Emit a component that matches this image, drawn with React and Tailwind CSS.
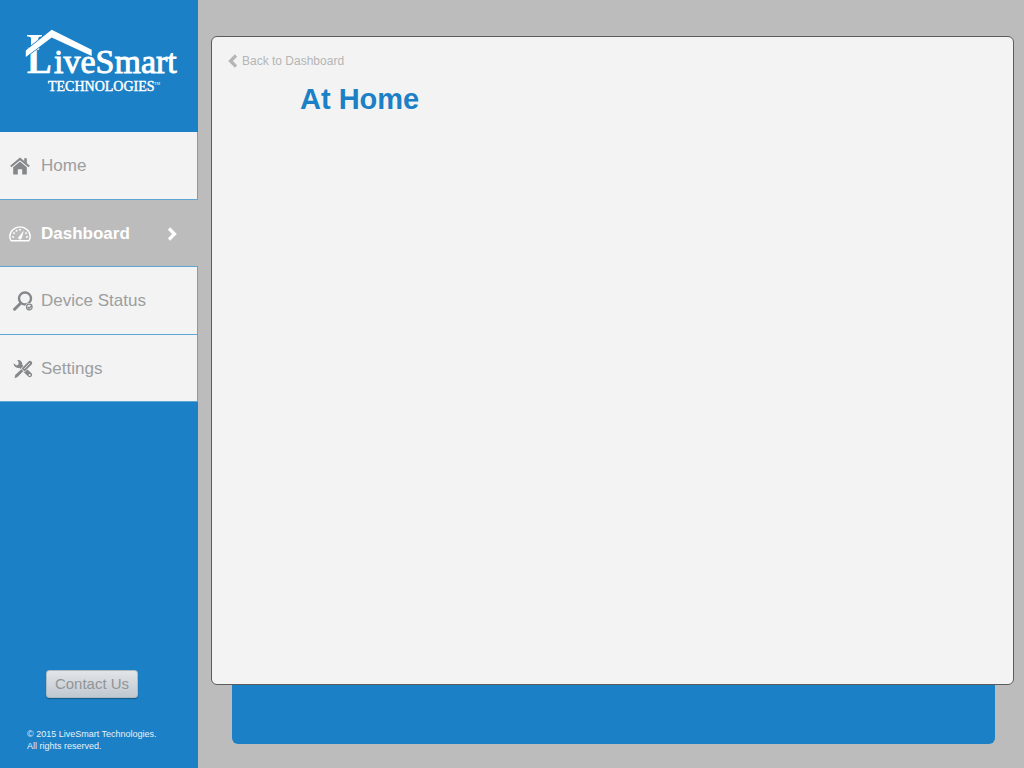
import React from "react";

function Logo() {
  return (
    <svg
      className="block h-[70px] w-[154px] fill-white"
      viewBox="24 26 154 70"
      role="img"
      aria-label="LiveSmart Technologies"
      fontFamily="'Liberation Serif', serif"
    >
      <path d="M27 35h15v1.2l-3 .8-.6 1V46L31 53V38l-.8-1-3.2-.8z" />
      <text x="27" y="73" fontSize="37" fontWeight="700" stroke="white" strokeWidth="0.4">L</text>
      <path className="fill-[#1b80c5]" d="M39.200 46l6-4v10h-6z" />
      <path
        className="fill-white stroke-[#1b80c5]"
        strokeWidth="1.6"
        paintOrder="stroke"
        d="M25.8 50.5 51.7 29.800 91.7 49.800V56L51.7 37.400 25.8 57z"
      />
      <text x="54" y="73" fontSize="34" stroke="white" strokeWidth="0.9">iveSmart</text>
      <text x="48" y="91" fontSize="14" stroke="white" strokeWidth="0.4">TECHNOLOGIES</text>
      <text x="154" y="85" fontSize="4">TM</text>
    </svg>
  );
}

function HomeIcon() {
  return (
    <svg className="h-[18px] w-5" viewBox="0 0 20 18" aria-hidden="true">
      <path d="M.8 9.6 10 1.9l9.2 7.7" fill="none" stroke="currentColor" strokeWidth="2" />
      <path d="M14.2 1.2h2.6v5.2l-2.6-2.2z" fill="currentColor" />
      <path d="M3.2 10.2 10 4.6l6.8 5.6v7.3h-4.6v-5.2H7.8v5.2H3.2z" fill="currentColor" />
    </svg>
  );
}

function GaugeIcon() {
  return (
    <svg className="h-4 w-[22px]" viewBox="0 0 22 16" aria-hidden="true">
      <path
        d="M2.2 14.7C1.2 13.7.8 12.2.8 10.7.8 5.2 5.4.9 11 .9s10.2 4.3 10.2 9.8c0 1.5-.4 3-1.4 4z"
        fill="none"
        stroke="currentColor"
        strokeWidth="1.4"
        strokeLinejoin="round"
      />
      <path d="M9.4 11.6c.4-1 3.4-4.6 5.4-7.2-.6 3.2-2 7.6-2.6 8.6-.8 1.2-3.4.4-2.8-1.4z" fill="currentColor" />
      <g fill="currentColor">
        <circle cx="4" cy="11" r="1" />
        <circle cx="5" cy="7.3" r="1" />
        <circle cx="7.5" cy="4.7" r="1" />
        <circle cx="11" cy="3.7" r="1" />
        <circle cx="17" cy="7.3" r="1" />
        <circle cx="18" cy="11" r="1" />
      </g>
    </svg>
  );
}

function SearchCheckIcon() {
  return (
    <svg className="h-5 w-5" viewBox="0 0 20 20" aria-hidden="true">
      <circle cx="12" cy="7.5" r="6" fill="none" stroke="currentColor" strokeWidth="2.4" />
      <path d="M7.6 12.2 1.6 18.2" stroke="currentColor" strokeWidth="3" strokeLinecap="round" />
      <circle cx="16.3" cy="16" r="4" fill="#f3f3f3" />
      <circle cx="16.3" cy="16" r="2.8" fill="none" stroke="currentColor" strokeWidth="1.2" />
      <path d="m14.7 15.9 1.3 1.3 2.8-2.8" fill="none" stroke="currentColor" strokeWidth="1.4" />
    </svg>
  );
}

function ToolsIcon() {
  return (
    <svg className="h-5 w-5" viewBox="0 0 20 20" aria-hidden="true">
      <path
        d="M4.3 1C7.2.4 9.8 2.800 9.200 5.800l9.300 8.500c2 2-1.100 5.300-3.300 3.300L6.200 8.800C3.200 9.600.4 7.400.6 4.300l2.900 2.100 2-.9.1-2.200z"
        fill="currentColor"
      />
      <circle cx="16.6" cy="16.1" r="1" fill="#f3f3f3" />
      <path
        d="m1.600 19.200.6-3.200 6.600-6.200 1.900 1.900-6.200 6.400z"
        fill="currentColor"
        stroke="#f3f3f3"
        strokeWidth="1.4"
        paintOrder="stroke"
      />
      <path
        d="m8.600 9.600 6.900-7.200c2-1.800 4.900 1.100 3.100 3.100L11.600 12.400z"
        fill="currentColor"
        stroke="#f3f3f3"
        strokeWidth="1.2"
        paintOrder="stroke"
      />
      <path d="m11.300 9.900 5.600-5.800" stroke="#f3f3f3" strokeWidth=".9" />
    </svg>
  );
}

function Chevron({ className }) {
  return (
    <svg className={className} viewBox="0 0 10 14" aria-hidden="true">
      <path d="m2 1.5 5.5 5.5L2 12.5" fill="none" stroke="currentColor" strokeWidth="3.2" />
    </svg>
  );
}

const items = [
  { label: "Home", icon: <HomeIcon /> },
  { label: "Dashboard", icon: <GaugeIcon />, active: true },
  { label: "Device Status", icon: <SearchCheckIcon />, inset: true },
  { label: "Settings", icon: <ToolsIcon />, inset: true },
];

function NavItem({ label, icon, active, inset }) {
  return (
    <li
      className={
        active
          ? "border-b border-[#5fa5d3] bg-[#bcbcbc] font-bold text-white"
          : "border-r border-b border-[#5fa5d3] bg-[#f3f3f3] text-[#9c9ea0]"
      }
    >
      <a
        href="#"
        aria-current={active ? "page" : undefined}
        className="flex h-full items-center pt-0.5 pr-[21px] pl-[9px] text-[17px] leading-6"
      >
        <span
          className={
            active
              ? "flex w-8 shrink-0"
              : inset
                ? "flex w-8 shrink-0 pl-1 text-[#85878a]"
                : "flex w-8 shrink-0 pl-px text-[#85878a]"
          }
        >
          {icon}
        </span>
        <span className="flex-1">{label}</span>
        {active && <Chevron className="h-[14px] w-[10px]" />}
      </a>
    </li>
  );
}

export default function App() {
  return (
    <div className="flex min-h-screen bg-[#bcbcbc] font-['Liberation_Sans',Arial,sans-serif]">
      <aside className="flex w-[198px] shrink-0 flex-col bg-[#1b80c5]">
        <div className="h-[132px] pt-[26px] pl-6">
          <Logo />
        </div>
        <nav aria-label="Main">
          <ul className="grid h-[270px] grid-rows-4">
            {items.map((item) => (
              <NavItem key={item.label} {...item} />
            ))}
          </ul>
        </nav>
        <div className="mt-auto pb-4">
          <button
            type="button"
            className="ml-[46px] block h-7 w-[92px] rounded-[3px] border border-[#aeb9c2] bg-linear-to-b from-[#e2e5e8] to-[#c0c8d0] text-[15px] leading-6 whitespace-nowrap text-[#929496] shadow-[0_1px_1px_rgba(0,0,0,0.3)]"
          >
            Contact Us
          </button>
          <p className="mt-[30px] pl-[27px] text-[9px] leading-3 text-[#e8f2f9]">
            © 2015 LiveSmart Technologies.
            <br />
            All rights reserved.
          </p>
        </div>
      </aside>
      <div className="flex flex-1 flex-col pt-9 pr-[10px] pb-6 pl-[13px]">
        <main className="flex-1 rounded-md border border-[#5c5c5c] bg-[#f3f3f3] px-4 pt-4">
          <a href="#" className="flex w-fit items-center gap-1 text-[12px] leading-4 text-[#b5b5b5]">
            <Chevron className="h-[14px] w-[10px] rotate-180" />
            Back to Dashboard
          </a>
          <h1 className="mt-3 pl-[72px] text-[29px] leading-9 font-bold text-[#1b80c5]">At Home</h1>
        </main>
        <footer className="mr-[19px] ml-[21px] h-[59px] rounded-b-md bg-[#1b80c5]" />
      </div>
    </div>
  );
}
